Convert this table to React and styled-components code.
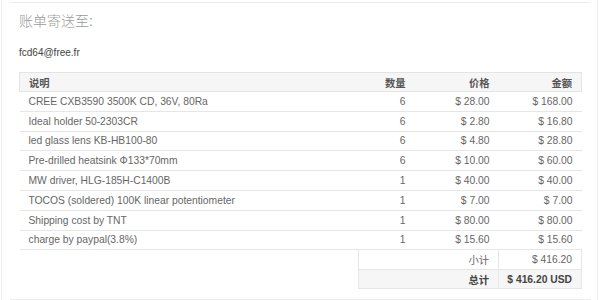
import React from 'react';
import styled, { createGlobalStyle } from 'styled-components';

const GlobalStyle = createGlobalStyle`
  html, body {
    margin: 0;
    padding: 0;
    background: #ffffff;
  }
  body {
    font-family: "Liberation Sans", Arial, "Noto Sans CJK SC", sans-serif;
  }
`;

const Frame = styled.div`
  box-sizing: border-box;
  width: 597px;
  height: 300px;
  margin-left: 1px;
  border-left: 1px solid #ededed;
  border-right: 1px solid #ededed;
  overflow: hidden;
`;

const TopRule = styled.div`
  height: 2px;
  margin: 0 7px 0 8px;
  border-bottom: 1px solid #ececec;
`;

const Section = styled.div`
  padding: 0 16px 0 17px;
`;

const Heading = styled.h4`
  margin: 9px 0 0;
  font-size: 14px;
  line-height: 18px;
  font-weight: 300;
  color: #9a9a9a;
`;

const Email = styled.div`
  margin-top: 17px;
  font-size: 10px;
  line-height: 12px;
  color: #444;
`;

const Table = styled.table`
  margin-top: 13px;
  width: 563px;
  border-collapse: collapse;
  table-layout: fixed;
  font-size: 10.3px;
  color: #666;
`;

const HeadCell = styled.th`
  height: 18px;
  padding: 0 9px;
  background: #f6f6f6;
  border-top: 1px solid #e4e4e4;
  border-bottom: 1px solid #e4e4e4;
  font-weight: bold;
  color: #555;
  text-align: ${p => (p.$align || 'left')};
  &:first-child { border-left: 1px solid #e4e4e4; }
  &:last-child { border-right: 1px solid #e4e4e4; }
`;

const Cell = styled.td`
  height: 18.8px;
  padding: 0 9px;
  border-bottom: 1px solid #e6e6e6;
  text-align: ${p => (p.$align || 'left')};
  white-space: nowrap;
`;

const Totals = styled.table`
  margin-left: 339px;
  width: 224px;
  border-collapse: collapse;
  table-layout: fixed;
  font-size: 10.3px;
  color: #666;
`;

const TotalCell = styled.td`
  height: 18.5px;
  padding: 0 9px 0 0;
  text-align: right;
  white-space: nowrap;
  border-left: 1px solid #e6e6e6;
  border-right: 1px solid #e6e6e6;
  border-bottom: 1px solid #e6e6e6;
  background: ${p => (p.$strong ? '#f6f6f6' : '#fff')};
  font-weight: ${p => (p.$strong ? 'bold' : 'normal')};
  color: ${p => (p.$strong ? '#444' : '#666')};
`;

const BottomRule = styled.div`
  margin: 10px 6px 0 8px;
  border-top: 1px solid #ececec;
`;

const items = [
  { name: 'CREE CXB3590 3500K CD, 36V, 80Ra', qty: 6, price: '$ 28.00', total: '$ 168.00' },
  { name: 'Ideal holder 50-2303CR', qty: 6, price: '$ 2.80', total: '$ 16.80' },
  { name: 'led glass lens KB-HB100-80', qty: 6, price: '$ 4.80', total: '$ 28.80' },
  { name: 'Pre-drilled heatsink Φ133*70mm', qty: 6, price: '$ 10.00', total: '$ 60.00' },
  { name: 'MW driver, HLG-185H-C1400B', qty: 1, price: '$ 40.00', total: '$ 40.00' },
  { name: 'TOCOS (soldered) 100K linear potentiometer', qty: 1, price: '$ 7.00', total: '$ 7.00' },
  { name: 'Shipping cost by TNT', qty: 1, price: '$ 80.00', total: '$ 80.00' },
  { name: 'charge by paypal(3.8%)', qty: 1, price: '$ 15.60', total: '$ 15.60' },
];

const App = () => {
  return (
    <>
      <GlobalStyle />
      <Frame>
        <TopRule />
        <Section>
          <Heading>账单寄送至:</Heading>
          <Email>fcd64@free.fr</Email>
          <Table>
            <colgroup>
              <col />
              <col style={{ width: 60 }} />
              <col style={{ width: 84 }} />
              <col style={{ width: 83 }} />
            </colgroup>
            <thead>
              <tr>
                <HeadCell>说明</HeadCell>
                <HeadCell $align="right">数量</HeadCell>
                <HeadCell $align="right">价格</HeadCell>
                <HeadCell $align="right">金额</HeadCell>
              </tr>
            </thead>
            <tbody>
              {items.map(item => (
                <tr key={item.name}>
                  <Cell>{item.name}</Cell>
                  <Cell $align="right">{item.qty}</Cell>
                  <Cell $align="right">{item.price}</Cell>
                  <Cell $align="right">{item.total}</Cell>
                </tr>
              ))}
            </tbody>
          </Table>
          <Totals>
            <colgroup>
              <col />
              <col style={{ width: 83 }} />
            </colgroup>
            <tbody>
              <tr>
                <TotalCell>小计</TotalCell>
                <TotalCell>$ 416.20</TotalCell>
              </tr>
              <tr>
                <TotalCell $strong>总计</TotalCell>
                <TotalCell $strong>$ 416.20 USD</TotalCell>
              </tr>
            </tbody>
          </Totals>
        </Section>
        <BottomRule />
      </Frame>
    </>
  );
};

export default App;
